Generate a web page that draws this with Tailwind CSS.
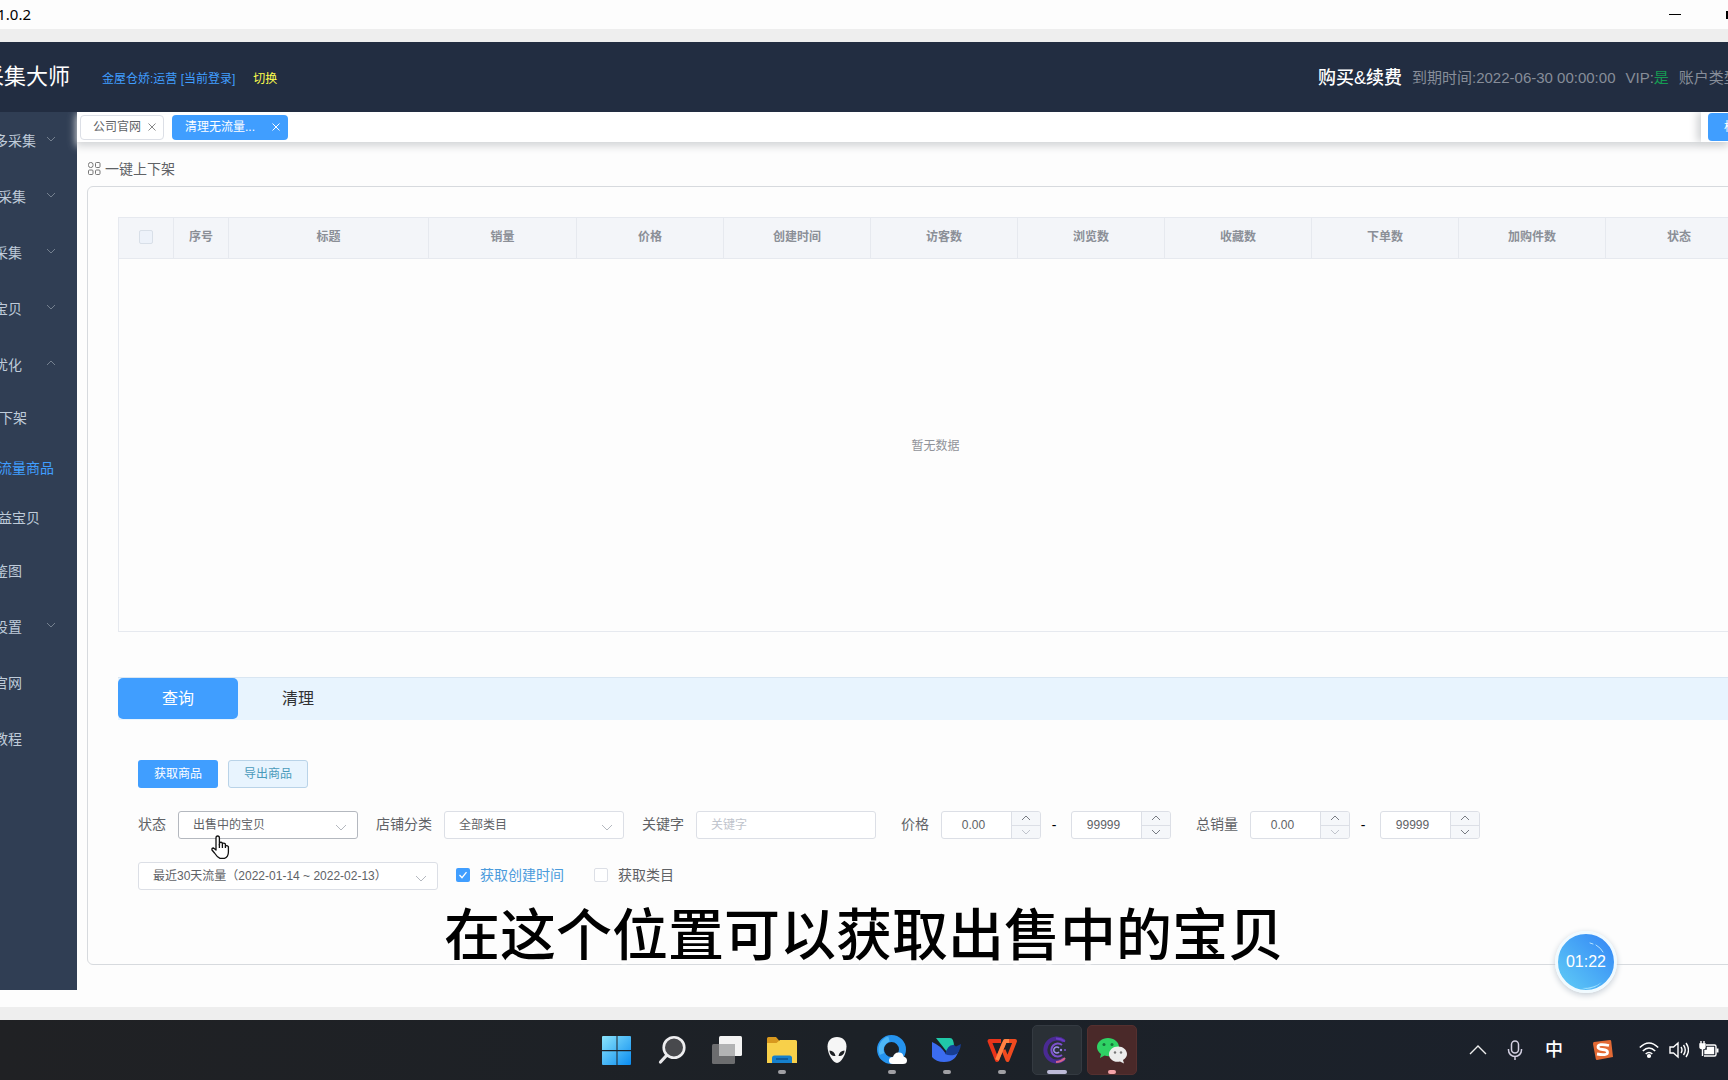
<!DOCTYPE html>
<html lang="zh-CN">
<head>
<meta charset="utf-8">
<title>采集大师</title>
<script src="https://cdn.jsdelivr.net/npm/@tailwindcss/browser@4"></script>
</head>
<body class="overflow-hidden bg-[#fdfdfd] font-['Liberation_Sans','Noto_Sans_CJK_SC',sans-serif] text-[#606266]">
<div class="relative flex min-h-screen flex-col overflow-hidden">

  <!-- Window title bar -->
  <div class="flex h-[29px] items-center justify-between overflow-hidden">
    <div class="flex w-[31px] justify-end font-['Noto_Sans',sans-serif] text-[15px] leading-none whitespace-nowrap text-black"><span>1.0.2</span></div>
    <div class="flex items-center gap-[45px]">
      <button aria-label="最小化" class="flex h-6 w-3 items-center"><span class="h-px w-3 bg-black"></span></button>
      <button aria-label="最大化" class="h-2 w-[2px] bg-black"></button>
    </div>
  </div>
  <div class="h-[13px] bg-[#eeeeee]"></div>

  <!-- Application header -->
  <header class="relative z-10 flex h-[70px] items-center justify-between overflow-hidden bg-[#222d41] whitespace-nowrap">
    <div class="flex items-center">
      <div class="flex w-[70px] justify-end text-[22px] leading-8 text-white"><h1>采集大师</h1></div>
      <span class="ml-8 pt-1 text-xs text-[#409eff]">金屋仓娇:运营 [当前登录]</span>
      <a href="#" class="ml-[18px] pt-1 text-xs text-[#ffff4d]">切换</a>
    </div>
    <div class="flex w-[410px] items-center pt-0.5 text-[15px] text-[#878d99]">
      <a href="#" class="mr-2.5 text-lg font-medium text-white">购买&amp;续费</a>
      <span class="mr-2.5">到期时间:2022-06-30 00:00:00</span>
      <span class="mr-2.5">VIP:<span class="text-[#159b52]">是</span></span>
      <span>账户类型:</span>
    </div>
  </header>

  <div class="flex flex-1">
    <!-- Sidebar -->
    <nav class="mb-[17px] w-[77px] shrink-0 overflow-hidden bg-[#303e54] pt-px text-sm whitespace-nowrap text-[#bfcbd9]">
      <a href="#" class="flex h-14 items-center gap-[9px]"><span class="flex w-9 justify-end">多采集</span><svg class="-mt-1 h-3 w-3" viewBox="0 0 12 12" fill="none" stroke="#74808f"><path d="M2 4l4 4 4-4"/></svg></a>
      <a href="#" class="flex h-14 items-center gap-[19px]"><span class="flex w-[26px] justify-end">采集</span><svg class="-mt-1 h-3 w-3" viewBox="0 0 12 12" fill="none" stroke="#74808f"><path d="M2 4l4 4 4-4"/></svg></a>
      <a href="#" class="flex h-14 items-center gap-[23px]"><span class="flex w-[22px] justify-end">采集</span><svg class="-mt-1 h-3 w-3" viewBox="0 0 12 12" fill="none" stroke="#74808f"><path d="M2 4l4 4 4-4"/></svg></a>
      <a href="#" class="flex h-14 items-center gap-[23px]"><span class="flex w-[22px] justify-end">宝贝</span><svg class="-mt-1 h-3 w-3" viewBox="0 0 12 12" fill="none" stroke="#74808f"><path d="M2 4l4 4 4-4"/></svg></a>
      <a href="#" class="flex h-14 items-center gap-[23px]"><span class="flex w-[22px] justify-end">优化</span><svg class="-mt-1 h-3 w-3" viewBox="0 0 12 12" fill="none" stroke="#74808f"><path d="M2 8l4-4 4 4"/></svg></a>
      <a href="#" class="flex h-[50px] items-center"><span class="flex w-[27px] justify-end">下架</span></a>
      <a href="#" class="flex h-[50px] items-center text-[#409eff]"><span class="flex w-[54px] justify-end">流量商品</span></a>
      <a href="#" class="flex h-[50px] items-center"><span class="flex w-10 justify-end">益宝贝</span></a>
      <a href="#" class="flex h-14 items-center"><span class="flex w-[22px] justify-end">鉴图</span></a>
      <a href="#" class="flex h-14 items-center gap-[23px]"><span class="flex w-[22px] justify-end">设置</span><svg class="-mt-1 h-3 w-3" viewBox="0 0 12 12" fill="none" stroke="#74808f"><path d="M2 4l4 4 4-4"/></svg></a>
      <a href="#" class="flex h-14 items-center"><span class="flex w-[22px] justify-end">官网</span></a>
      <a href="#" class="flex h-14 items-center"><span class="flex w-[22px] justify-end">教程</span></a>
    </nav>

    <main class="flex min-w-0 flex-1 flex-col">
      <!-- Page tabs -->
      <div class="flex h-[30px] items-center bg-white pl-[3px] text-xs shadow-[0_3px_8px_1px_#d2d4d6]">
        <div class="flex h-[25px] w-[84px] items-center justify-between rounded-sm border border-[#dcdfe6] pr-1.5 pl-3 text-[#606266]"><a href="#">公司官网</a>
          <button aria-label="关闭公司官网"><svg class="h-2.5 w-2.5" viewBox="0 0 10 10" fill="none" stroke="#888"><path d="M1.500 1.500l7 7M8.500 1.500l-7 7"/></svg></button></div>
        <div class="ml-2 flex h-[25px] w-[116px] items-center justify-between rounded-sm bg-[#409eff] pr-[7px] pl-[13px] text-white"><a href="#">清理无流量...</a>
          <button aria-label="关闭清理无流量"><svg class="h-2.5 w-2.5" viewBox="0 0 10 10" fill="none" stroke="#fff"><path d="M1.500 1.500l7 7M8.500 1.500l-7 7"/></svg></button></div>
        <div class="ml-auto flex h-full w-[27px] items-center overflow-hidden bg-white pl-[7px] shadow-[-4px_0_8px_#d2d4d6]">
          <button class="h-7 w-24 shrink-0 rounded-sm bg-[#409eff] pl-4 text-left text-white">标签选项</button>
        </div>
      </div>

      <!-- Breadcrumb -->
      <div class="flex h-11 items-start gap-[3px] pt-4 pl-[11px] text-sm">
        <svg class="mt-1 h-3.5 w-3.5" viewBox="0 0 14 14" fill="none" stroke="#777"><rect x=".5" y=".5" width="4.500" height="5" rx="2"/><rect x="7.500" y=".5" width="4.500" height="5" rx="1"/><rect x=".5" y="8" width="4.500" height="4.500" rx="1"/><rect x="7.500" y="8" width="4.500" height="4.500" rx="1"/></svg>
        <span class="leading-[22px]">一键上下架</span>
      </div>

      <section class="-mr-[60px] mb-[42px] ml-2.5 flex-1 rounded-md border border-[#d7dade] pt-[30px] pr-[34px] pl-[30px]">
        <table class="w-full table-fixed border-collapse border border-[#e6e9ef] text-xs">
          <colgroup><col class="w-[55px]"><col class="w-[55px]"><col class="w-[200px]"><col class="w-[148px]"><col><col><col><col><col><col><col><col></colgroup>
          <thead class="bg-[#f3f5f9] text-[#8b8f97]">
            <tr class="h-[41px] border-b border-[#e6e9ef]">
              <th class="border-r border-[#e6e9ef] pb-0.5"><input type="checkbox" aria-label="全选" class="mx-auto block h-3.5 w-3.5 appearance-none rounded-xs border border-[#d8dfe8] bg-[#edf2fa]"></th>
              <th class="border-r border-[#e6e9ef] pb-0.5">序号</th><th class="border-r border-[#e6e9ef] pb-0.5">标题</th><th class="border-r border-[#e6e9ef] pb-0.5">销量</th><th class="border-r border-[#e6e9ef] pb-0.5">价格</th><th class="border-r border-[#e6e9ef] pb-0.5">创建时间</th><th class="border-r border-[#e6e9ef] pb-0.5">访客数</th><th class="border-r border-[#e6e9ef] pb-0.5">浏览数</th><th class="border-r border-[#e6e9ef] pb-0.5">收藏数</th><th class="border-r border-[#e6e9ef] pb-0.5">下单数</th><th class="border-r border-[#e6e9ef] pb-0.5">加购件数</th><th class="pb-0.5">状态</th>
            </tr>
          </thead>
          <tbody><tr class="h-[373px]"><td colspan="12" class="pt-0.5 text-center text-[#909399]">暂无数据</td></tr></tbody>
        </table>

        <!-- Operation tabs -->
        <div class="mt-[45px] flex h-[43px] border-t border-[#d9e6f2] bg-[#e8f4fe] text-base">
          <button class="h-[41px] w-[120px] rounded-[5px] bg-[#409eff] text-white">查询</button>
          <button class="h-[41px] w-[120px] text-[#303133]">清理</button>
        </div>

        <form class="pl-5 text-sm whitespace-nowrap">
          <div class="mt-10 flex gap-2.5 text-xs">
            <button type="button" class="h-7 w-20 rounded-[3px] bg-[#409eff] text-white">获取商品</button>
            <button type="button" class="h-7 w-20 rounded-[3px] border border-[#b9d3e8] bg-[#e8f4fe] text-[#4a9bbb]">导出商品</button>
          </div>

          <div class="mt-[23px] flex h-7 items-center">
            <label for="state" class="w-10 pb-0.5">状态</label>
            <div class="relative"><select id="state" class="block h-7 w-[180px] appearance-none rounded-[3px] border border-[#b4b8bf] bg-white pl-3.5 text-xs">
              <option>出售中的宝贝</option></select><svg class="pointer-events-none absolute top-2.5 right-[11px] h-3 w-3" viewBox="0 0 12 12" fill="none" stroke="#b4b8bf"><path d="M1 4l5 5 5-5"/></svg></div>
            <label for="cat" class="ml-[18px] w-[68px] pb-0.5">店铺分类</label>
            <div class="relative"><select id="cat" class="block h-7 w-[180px] appearance-none rounded-[3px] border border-[#dcdfe6] bg-white pl-3.5 text-xs">
              <option>全部类目</option></select><svg class="pointer-events-none absolute top-2.5 right-[11px] h-3 w-3" viewBox="0 0 12 12" fill="none" stroke="#b4b8bf"><path d="M1 4l5 5 5-5"/></svg></div>
            <label for="kw" class="ml-[18px] w-[54px] pb-0.5">关键字</label>
            <input id="kw" type="text" placeholder="关键字" class="h-7 w-[180px] rounded-[3px] border border-[#dcdfe6] bg-white pl-3.5 text-xs placeholder:text-[#c0c4cc]">
            <label for="pmin" class="ml-[25px] w-10 pb-0.5">价格</label>
            <div class="flex h-7 w-[100px] overflow-hidden rounded-[3px] border border-[#dcdfe6] bg-white">
              <input id="pmin" type="text" value="0.00" class="w-[69px] pr-1.5 text-center text-xs">
              <div class="flex flex-1 flex-col divide-y divide-[#dcdfe6] border-l border-[#dcdfe6] bg-[#f5f7fa]">
                <button type="button" aria-label="增加" class="flex flex-1 items-center justify-center"><svg class="h-2 w-2.5" viewBox="0 0 10 8" fill="none" stroke="#777b82"><path d="M1 6l4-4 4 4"/></svg></button>
                <button type="button" aria-label="减少" class="flex flex-1 items-center justify-center"><svg class="h-2 w-2.5" viewBox="0 0 10 8" fill="none" stroke="#c0c4cc"><path d="M1 2l4 4 4-4"/></svg></button>
              </div></div>
            <span class="w-[30px] pr-1 text-center text-black">-</span>
            <div class="flex h-7 w-[100px] overflow-hidden rounded-[3px] border border-[#dcdfe6] bg-white">
              <input aria-label="最高价格" type="text" value="99999" class="w-[69px] pr-1.5 text-center text-xs">
              <div class="flex flex-1 flex-col divide-y divide-[#dcdfe6] border-l border-[#dcdfe6] bg-[#f5f7fa]">
                <button type="button" aria-label="增加" class="flex flex-1 items-center justify-center"><svg class="h-2 w-2.5" viewBox="0 0 10 8" fill="none" stroke="#777b82"><path d="M1 6l4-4 4 4"/></svg></button>
                <button type="button" aria-label="减少" class="flex flex-1 items-center justify-center"><svg class="h-2 w-2.5" viewBox="0 0 10 8" fill="none" stroke="#777b82"><path d="M1 2l4 4 4-4"/></svg></button>
              </div></div>
            <label for="smin" class="ml-[25px] w-[54px] pb-0.5">总销量</label>
            <div class="flex h-7 w-[100px] overflow-hidden rounded-[3px] border border-[#dcdfe6] bg-white">
              <input id="smin" type="text" value="0.00" class="w-[69px] pr-1.5 text-center text-xs">
              <div class="flex flex-1 flex-col divide-y divide-[#dcdfe6] border-l border-[#dcdfe6] bg-[#f5f7fa]">
                <button type="button" aria-label="增加" class="flex flex-1 items-center justify-center"><svg class="h-2 w-2.5" viewBox="0 0 10 8" fill="none" stroke="#777b82"><path d="M1 6l4-4 4 4"/></svg></button>
                <button type="button" aria-label="减少" class="flex flex-1 items-center justify-center"><svg class="h-2 w-2.5" viewBox="0 0 10 8" fill="none" stroke="#c0c4cc"><path d="M1 2l4 4 4-4"/></svg></button>
              </div></div>
            <span class="w-[30px] pr-1 text-center text-black">-</span>
            <div class="flex h-7 w-[100px] overflow-hidden rounded-[3px] border border-[#dcdfe6] bg-white">
              <input aria-label="最高销量" type="text" value="99999" class="w-[69px] pr-1.5 text-center text-xs">
              <div class="flex flex-1 flex-col divide-y divide-[#dcdfe6] border-l border-[#dcdfe6] bg-[#f5f7fa]">
                <button type="button" aria-label="增加" class="flex flex-1 items-center justify-center"><svg class="h-2 w-2.5" viewBox="0 0 10 8" fill="none" stroke="#777b82"><path d="M1 6l4-4 4 4"/></svg></button>
                <button type="button" aria-label="减少" class="flex flex-1 items-center justify-center"><svg class="h-2 w-2.5" viewBox="0 0 10 8" fill="none" stroke="#777b82"><path d="M1 2l4 4 4-4"/></svg></button>
              </div></div>
          </div>

          <div class="mt-[23px] flex h-7 items-center">
            <div class="relative"><select aria-label="流量周期" class="block h-7 w-[300px] appearance-none rounded-[3px] border border-[#dcdfe6] bg-white pl-3.5 text-xs">
              <option>最近30天流量（2022-01-14 ~ 2022-02-13）</option></select><svg class="pointer-events-none absolute top-2.5 right-[11px] h-3 w-3" viewBox="0 0 12 12" fill="none" stroke="#b4b8bf"><path d="M1 4l5 5 5-5"/></svg></div>
            <label class="ml-[18px] flex items-center gap-2.5 pb-0.5 text-[#4b9bdc]"><span class="relative flex"><input type="checkbox" checked class="h-3.5 w-3.5 appearance-none rounded-xs bg-[#409eff]"><svg class="pointer-events-none absolute inset-0 h-3.5 w-3.5" viewBox="0 0 14 14" fill="none" stroke="#fff" stroke-width="1.300"><path d="M3.500 7l2.500 2.700 4.500-5.500"/></svg></span>获取创建时间</label>
            <label class="ml-[30px] flex items-center gap-2.5 pb-0.5"><input type="checkbox" class="h-3.5 w-3.5 appearance-none rounded-xs border border-[#dcdfe6] bg-white">获取类目</label>
          </div>
        </form>
      </section>
    </main>
  </div>

  <div class="h-[13px] bg-[#eeeeee]"></div>

  <!-- Taskbar -->
  <footer class="relative flex h-[60px] items-start justify-center bg-linear-to-r from-[#202124] via-[#1c2127] to-[#1b212c] pt-[5px]">
    <div class="flex gap-[5px]">
      <button aria-label="开始" class="flex h-[50px] w-[50px] items-center justify-center"><svg class="h-[30px] w-[30px]" viewBox="0 0 30 30"><defs><linearGradient id="win" x1="0" y1="0" x2="1" y2="1"><stop stop-color="#8be4fc"/><stop offset="1" stop-color="#0a8cf0"/></linearGradient></defs><path fill="url(#win)" d="M1 1h13.500v14H0V2q0-1 1-1zM15.500 1H28q1 0 1 1v13H15.500zM0 16.200h14.500V30H1q-1 0-1-1zM15.500 16.200H29V29q0 1-1 1H15.500z"/></svg></button>
      <button aria-label="搜索" class="flex h-[50px] w-[50px] items-center justify-center"><svg class="h-[30px] w-[30px]" viewBox="0 0 30 30"><path d="M10 20l-6.500 7" stroke="#e8e8ea" stroke-width="3.200" stroke-linecap="round"/><circle cx="17" cy="12.500" r="10.300" fill="#48494d" stroke="#eeeef0" stroke-width="2.600"/></svg></button>
      <button aria-label="任务视图" class="flex h-[50px] w-[50px] items-center justify-center"><svg class="h-[30px] w-[30px]" viewBox="0 0 30 30"><rect x="7" y="1" width="23" height="20" rx="1.500" fill="#f3f3f3"/><rect x="0" y="9" width="23" height="20" rx="1.500" fill="#77787a" opacity=".88"/><path d="M7 9h16v12H7z" fill="#b2b3b4"/></svg></button>
      <button aria-label="文件资源管理器" class="relative flex h-[50px] w-[50px] items-center justify-center"><svg class="h-[30px] w-[30px]" viewBox="0 0 30 30"><path d="M0 3.500Q0 2 1.500 2H9l3.500 4H20v8H0z" fill="#d8981e"/><path d="M0 8h9.500L13 5h15.500Q30 5 30 6.500V28H0z" fill="#f8d04a"/><path d="M5 28v-5q0-2.500 2.500-2.500h15Q25 20.500 25 23v5z" fill="#1680cc"/><path d="M9 24h12" stroke="#0d4f8c" stroke-width="1.500"/></svg><span class="absolute bottom-[1px] h-1 w-2 rounded-full bg-[#a0a0a4]"></span></button>
      <button aria-label="外星人控制中心" class="flex h-[50px] w-[50px] items-center justify-center"><svg class="h-[30px] w-[30px]" viewBox="0 0 30 30"><path d="M15 2c6 0 9.500 4 9.500 9.500C24.500 19 19 28 15 28S5.500 19 5.500 11.500C5.500 6 9 2 15 2z" fill="#f6f6f6"/><path d="M7.500 15.500c3 .3 5.500 2 6 5.500C9.500 21 7.500 19 7.500 15.500zM22.500 15.500c-3 .3-5.500 2-6 5.500 4 0 6-2 6-5.500z" fill="#1d2024"/></svg></button>
      <button aria-label="QQ浏览器" class="relative flex h-[50px] w-[50px] items-center justify-center"><svg class="h-[30px] w-[30px]" viewBox="0 0 30 30"><circle cx="14.500" cy="14.500" r="11" fill="none" stroke="#2593ee" stroke-width="7"/><path d="M5 19A11 11 0 0 1 12 4" fill="none" stroke="#5fc6fa" stroke-width="5" opacity=".7"/><path d="M16 29q-4 0-4-3.500t4-3.500q1.500-5 6-4.500 4 0 4.500 4 3.500 1 3.500 4 0 3.500-4 3.500z" fill="#fff"/></svg><span class="absolute bottom-[1px] h-1 w-2 rounded-full bg-[#a0a0a4]"></span></button>
      <button aria-label="迅雷" class="relative flex h-[50px] w-[50px] items-center justify-center"><svg class="h-[30px] w-[30px]" viewBox="0 0 30 30"><path d="M4 3h14q4 0 4 9l-7 5z" fill="#20c8a8"/><path d="M0 7q8 3 14 12 7-6 13-6-2 14-15 14Q4 27 0 22z" fill="#3b6cf0"/><path d="M13 19q3-10 9-9l2 1.500L29 9q-1 10-7 11-5 1-9-1z" fill="#173d92"/></svg><span class="absolute bottom-[1px] h-1 w-2 rounded-full bg-[#a0a0a4]"></span></button>
      <button aria-label="WPS" class="relative flex h-[50px] w-[50px] items-center justify-center"><svg class="h-[30px] w-[30px]" viewBox="0 0 30 30" fill="none" stroke-linejoin="round" stroke-width="4"><path d="M14 6H2.500L10 25l7-17" stroke="#e8341a"/><path d="M21 6h7L20.500 25 16.500 15" stroke="#f04a1f"/><path d="M10 25l8-19h4" stroke="#ff8243"/></svg><span class="absolute bottom-[1px] h-1 w-2 rounded-full bg-[#a0a0a4]"></span></button>
      <button aria-label="采集大师" class="relative flex h-[50px] w-[50px] items-center justify-center rounded-[5px] border border-[#343a41] bg-[#2a3036]"><svg class="h-[30px] w-[30px]" viewBox="0 0 30 30" fill="none"><path d="M22 6A11.500 11.500 0 1 0 22 24" stroke="#4a2a93" stroke-width="4"/><path d="M14 27q5 0 9-4" stroke="#d3648c" stroke-width="2"/><path d="M14 3.500q5 0 9 3" stroke="#6a3cc4" stroke-width="2"/><path d="M20 10a6.500 6.500 0 1 0 0 10" stroke="#7d50cf" stroke-width="2"/><path d="M17 13a3 3 0 1 0 0 4" stroke="#9d8bea" stroke-width="1.500"/><circle cx="19" cy="15" r="1.200" fill="#9d8bea"/><circle cx="23" cy="15" r="1" fill="#7d50cf"/></svg><span class="absolute bottom-0 h-1 w-5 rounded-full bg-[#bdbbd8]"></span></button>
      <button aria-label="微信" class="relative flex h-[50px] w-[50px] items-center justify-center rounded-[5px] border border-[#55302f] bg-[#4a2929]"><svg class="h-[30px] w-[30px]" viewBox="0 0 30 30"><path d="M11 3C5 3 0 7 0 12q0 4 4 7l-1 4 4.500-2.500q6 2 11-1.500 3.500-3 3.500-7C22 7 17 3 11 3z" fill="#2fd264"/><path d="M21 11.500c-5 0-9 3.500-9 8s5 8.500 11 7l4 2-1-3.500q4-2.500 4-6c0-4-4-7.500-9-7.500z" fill="#ececec"/><g fill="#15743a"><circle cx="7" cy="9.500" r="1.500"/><circle cx="15" cy="9.500" r="1.500"/></g><g fill="#777"><circle cx="18" cy="17.500" r="1.200"/><circle cx="24" cy="17.500" r="1.200"/></g></svg><span class="absolute bottom-0 h-1 w-2 rounded-full bg-[#f5a3a8]"></span></button>
    </div>

    <!-- System tray -->
    <div class="absolute top-5 right-[9px] flex h-5 items-center text-white">
      <svg class="mr-[17px] h-5 w-5" viewBox="0 0 20 20" fill="none" stroke="#eee" stroke-width="1.400"><path d="M2 14l8-8 8 8"/></svg>
      <svg class="mr-5 h-5 w-5" viewBox="0 0 20 20" fill="none" stroke="#d3d0e2" stroke-width="1.500"><rect x="6.500" y="1" width="7" height="12" rx="3.500"/><path d="M3.500 9v1a6.500 6.500 0 0 0 13 0V9M10 16.500V20"/></svg>
      <span class="mr-[30px] text-lg leading-5 font-medium">中</span>
      <svg class="mr-[26px] h-5 w-5" viewBox="0 0 20 20"><path d="M1 2l16-2q1 0 1.200 1L20 17l-16 3q-1 0-1.200-1L0 4q0-2 1-2z" fill="#e36a35"/><path d="M16 5.500Q5 3 5 7q0 2 4.500 2.500 5.500.5 5 3.200-.5 3-10.500 1.300" fill="none" stroke="#fff" stroke-width="2.800"/></svg>
      <svg class="mr-2.5 h-5 w-5" viewBox="0 0 20 20" fill="none" stroke="#fff" stroke-width="1.600"><path d="M.8 7.500q9.200-9 18.400 0M3.800 11q6.200-6 12.400 0M6.700 14q3.300-3 6.600 0"/><circle cx="10" cy="16" r="1.300" fill="#fff"/></svg>
      <svg class="mr-2.5 h-5 w-5" viewBox="0 0 20 20" fill="none" stroke="#fff" stroke-width="1.400"><path d="M1 7h3.500L9 3v14l-4.500-4H1zM12 7q2 3 0 6M14.500 5q3.500 5 0 10M17 3q5 7 0 14"/></svg>
      <svg class="h-5 w-5" viewBox="0 0 20 20" fill="none" stroke="#fff" stroke-width="1.400"><path d="M7 5h8.500Q17 5 17 6.500v8q0 1.500-1.500 1.500H5"/><path d="M8.500 7.500h6v6H6v-3h2.500z" fill="#fff"/><path d="M18.500 8.500v4" stroke-width="2"/><path d="M1 4h5v3q0 1.500-1.500 1.500h-2Q1 8.500 1 7z" fill="#fff"/><path d="M2 1v3M5 1v3M3.500 8v8"/></svg>
    </div>
  </footer>

  <!-- Video caption, timer and pointer laid over the window -->
  <p class="absolute bottom-[104px] left-1/2 -translate-x-1/2 text-[56px] leading-[80px] font-medium whitespace-nowrap text-black [text-shadow:3px_3px_1px_#fdfdfd,-3px_3px_1px_#fdfdfd,3px_-3px_1px_#fdfdfd,-3px_-3px_1px_#fdfdfd,0_4px_1px_#fdfdfd]">在这个位置可以获取出售中的宝贝</p>
  <div class="absolute right-[111px] bottom-[87px] flex h-[62px] w-[62px] items-center justify-center rounded-full border-[3px] border-[#f0faff] bg-linear-to-tr from-[#62cdf5] to-[#3583f5] text-base text-white shadow-[0_2px_6px_#c5cdd5]">01:22
    <svg class="absolute inset-0 h-14 w-14" viewBox="0 0 56 56" fill="none" stroke="#b5e2ff" stroke-linecap="round"><path d="M32 9l3 1M38 11q5 3 7 7"/><path d="M24 54q12 0 20-6-7 7-16 7z" fill="#9adfff" stroke="none"/></svg></div>
  <svg class="absolute top-[835px] left-[211px] h-6 w-[19px]" viewBox="0 0 19 24" fill="#fff" stroke="#111" stroke-width="1.300" stroke-linejoin="round"><path d="M5 15V3q0-2 1.700-2T8.400 3v7V8q1.500-1.500 3 0v2-1.500q1.500-1 3 .5v2q1.500-1 3 .6V17q0 5-4 6.300H9Q6 22 3.500 18L1 15q-.5-2 1.500-2z"/><path d="M8.400 9v4M11.400 10v3M14.400 11v2"/></svg>
</div>
</body>
</html>
